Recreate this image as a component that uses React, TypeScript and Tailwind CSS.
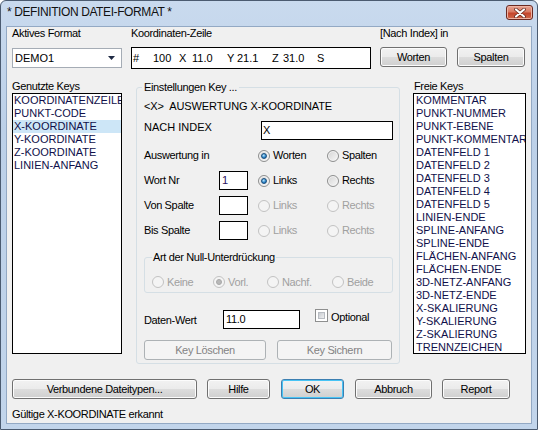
import React from "react";

const keysUsed = ["KOORDINATENZEILE", "PUNKT-CODE", "X-KOORDINATE", "Y-KOORDINATE", "Z-KOORDINATE", "LINIEN-ANFANG"];

const keysFree = [
  "KOMMENTAR",
  "PUNKT-NUMMER",
  "PUNKT-EBENE",
  "PUNKT-KOMMENTAR",
  "DATENFELD 1",
  "DATENFELD 2",
  "DATENFELD 3",
  "DATENFELD 4",
  "DATENFELD 5",
  "LINIEN-ENDE",
  "SPLINE-ANFANG",
  "SPLINE-ENDE",
  "FLÄCHEN-ANFANG",
  "FLÄCHEN-ENDE",
  "3D-NETZ-ANFANG",
  "3D-NETZ-ENDE",
  "X-SKALIERUNG",
  "Y-SKALIERUNG",
  "Z-SKALIERUNG",
  "TRENNZEICHEN",
];

interface BtnProps {
  label: string;
  className?: string;
  disabled?: boolean;
  primary?: boolean;
}

const Btn: React.FC<BtnProps> = ({ label, className = "", disabled, primary }) => {
  if (disabled) {
    return (
      <div className={`h-[20px] rounded-[3px] border border-[#adb2b5] bg-[#f4f4f4] text-[#838383] flex items-center justify-center ${className}`}>
        {label}
      </div>
    );
  }
  return (
    <div
      className={`h-[20px] rounded-[3px] border flex items-center justify-center text-black bg-[linear-gradient(to_bottom,#f2f2f2_0%,#ebebeb_50%,#dddddd_50%,#cfcfcf_100%)] ${
        primary ? "border-[#3c7fb1] shadow-[inset_0_0_0_1px_#48c4f5]" : "border-[#707070] shadow-[inset_0_0_0_1px_#fcfcfc]"
      } ${className}`}
    >
      {label}
    </div>
  );
};

const Radio: React.FC<{ checked?: boolean; disabled?: boolean }> = ({ checked, disabled }) => (
  <div
    className={`w-[12px] h-[12px] shrink-0 rounded-full border flex items-center justify-center ${
      disabled
        ? "border-[#c2c2c2] bg-[#f4f4f4]"
        : "border-[#8e8f8f] bg-[linear-gradient(135deg,#d4d4d4,#f8f8f8)] shadow-[inset_0_0_0_1px_#f4f4f4]"
    }`}
  >
    {checked && (
      <div
        className={`w-[6px] h-[6px] rounded-full ${
          disabled
            ? "bg-[#b8b8b8] border border-[#a8a8a8]"
            : "border border-[#1a4d7c] bg-[radial-gradient(circle_at_40%_35%,#b5e2fa,#2a84c8_60%,#0f5594)]"
        }`}
      />
    )}
  </div>
);

const RadioItem: React.FC<{ label: string; checked?: boolean; disabled?: boolean; className?: string }> = ({
  label,
  checked,
  disabled,
  className = "",
}) => (
  <div className={`flex items-center ${className}`}>
    <Radio checked={checked} disabled={disabled} />
    <span className={`ml-[3px] ${disabled ? "text-[#a0a0a0]" : "text-black"}`}>{label}</span>
  </div>
);

const ListBox: React.FC<{ items: string[]; selected?: number; className?: string; pad: string }> = ({
  items,
  selected,
  className = "",
  pad,
}) => (
  <div className={`h-[261px] border border-black bg-white overflow-hidden tracking-normal ${className}`}>
    {items.map((item, i) => (
      <div
        key={item}
        className={`h-[13px] leading-[13px] whitespace-nowrap text-[#10104a] ${pad} ${i === selected ? "bg-[#cde6f7]" : ""}`}
      >
        {item}
      </div>
    ))}
  </div>
);

const SmallInput: React.FC<{ value?: string }> = ({ value }) => (
  <div className="w-[29px] h-[19px] border border-black bg-white pl-[2px] leading-[17px] text-[#2a1060]">{value}</div>
);

const KeyRow: React.FC<{
  label: string;
  input?: string | null;
  left: string;
  right: string;
  leftChecked?: boolean;
  disabled?: boolean;
}> = ({ label, input, left, right, leftChecked, disabled }) => (
  <div className="h-[25px] flex items-center">
    <div className="w-[75px]">{label}</div>
    <div className="w-[39px]">{input !== null && <SmallInput value={input} />}</div>
    <RadioItem className="w-[69px]" label={left} checked={leftChecked} disabled={disabled} />
    <RadioItem label={right} disabled={disabled} />
  </div>
);

const CloseButton = () => (
  <div className="ml-auto mt-[4px] mr-[4px] w-[27px] h-[15px] rounded-[3px] border border-[#6b2a22] bg-[linear-gradient(to_bottom,#e8a493_0%,#d87a63_45%,#c4452c_55%,#d06a4c_100%)] shadow-[inset_0_0_0_1px_#eeb4a4] flex items-center justify-center">
    <svg width="12" height="10" viewBox="0 0 12 10">
      <path d="M2 1.5 L10 8.5 M10 1.5 L2 8.5" stroke="#5a2018" strokeWidth="3.6" strokeLinecap="round" />
      <path d="M2 1.5 L10 8.5 M10 1.5 L2 8.5" stroke="#ffffff" strokeWidth="2.2" strokeLinecap="round" />
    </svg>
  </div>
);

export default function App() {
  const coords: [string, string][] = [
    ["#", "w-[20px]"],
    ["100", "w-[26px]"],
    ["X", "w-[13px]"],
    ["11.0", "w-[35px]"],
    ["Y", "w-[10px]"],
    ["21.1", "w-[35px]"],
    ["Z", "w-[11px]"],
    ["31.0", "w-[34px]"],
    ["S", "w-[10px]"],
  ];

  return (
    <div className="w-[538px] h-[430px] font-['Liberation_Sans',Arial,sans-serif] text-[11px] leading-[13px] tracking-[-0.35px] text-black">
      <div className="w-full h-full flex flex-col rounded-t-[6px] border border-[#4b5b70] bg-[linear-gradient(to_bottom,#c9daee,#bcd0e8_30%,#c2d5eb)]">
        {/* Title bar */}
        <div className="h-[26px] flex items-start shrink-0">
          <div className="pl-[6px] pt-[4px] text-[12px] leading-[15px] tracking-[-0.4px] text-[#111]">* DEFINITION DATEI-FORMAT *</div>
          <CloseButton />
        </div>

        {/* Client area */}
        <div className="flex-1 mx-[6px] mb-[6px] bg-[#f0f0f0] pl-[5px] shadow-[0_0_0_1px_#93a9c4]">
          {/* Top row */}
          <div className="h-[53px] flex items-start">
            <div className="w-[110px]">
              <div>Aktives Format</div>
              <div className="mt-[8px] h-[20px] border border-[#a5acb5] bg-white flex items-center pl-[2px] tracking-normal">
                <span>DEMO1</span>
                <svg className="ml-auto mr-[6px]" width="7" height="4" viewBox="0 0 7 4">
                  <polygon points="0,0 7,0 3.5,4" fill="#1f2a44" />
                </svg>
              </div>
            </div>
            <div className="ml-[9px] w-[240px]">
              <div>Koordinaten-Zeile</div>
              <div className="mt-[7px] h-[22px] border border-black bg-white flex items-center pl-[1px] whitespace-nowrap tracking-normal">
                {coords.map(([t, w], i) => (
                  <span key={i} className={`inline-block ${w}`}>
                    {t}
                  </span>
                ))}
              </div>
            </div>
            <div className="ml-[9px]">
              <div>[Nach Index] in</div>
              <div className="mt-[7px] flex">
                <Btn label="Worten" className="w-[67px]" />
                <Btn label="Spalten" className="w-[68px] ml-[10px]" />
              </div>
            </div>
          </div>

          {/* Middle */}
          <div className="flex items-start">
            <div className="w-[110px]">
              <div>Genutzte Keys</div>
              <ListBox items={keysUsed} selected={2} pad="pl-[1px]" />
            </div>

            <fieldset className="ml-[14px] mt-[1px] w-[264px] border border-[#d5dfe5] rounded-[3px] pl-[7px] pr-[6px] pb-[3px]">
              <legend className="-ml-[2px] px-[2px]">Einstellungen Key ...</legend>
              <div className="mt-[5px] h-[14px] leading-[14px] whitespace-pre tracking-[-0.1px]">{"<X>  AUSWERTUNG X-KOORDINATE"}</div>
              <div className="mt-[8px] flex items-start tracking-normal">
                <div className="w-[117px]">NACH INDEX</div>
                <div className="w-[132px] h-[19px] border border-black bg-white pl-[1px] leading-[17px]">X</div>
              </div>
              <div className="mt-[3px]">
                <KeyRow label="Auswertung in" input={null} left="Worten" right="Spalten" leftChecked />
                <KeyRow label="Wort Nr" input="1" left="Links" right="Rechts" leftChecked />
                <KeyRow label="Von Spalte" input="" left="Links" right="Rechts" disabled />
                <KeyRow label="Bis Spalte" input="" left="Links" right="Rechts" disabled />
              </div>

              <fieldset className="mt-[8px] w-[249px] border border-[#d5dfe5] rounded-[3px] pl-[7px] pb-[1px]">
                <legend className="px-[1px]">Art der Null-Unterdrückung</legend>
                <div className="mt-[9px] h-[18px] flex items-center">
                  <RadioItem className="w-[61px]" label="Keine" disabled />
                  <RadioItem className="w-[54px]" label="Vorl." checked disabled />
                  <RadioItem className="w-[65px]" label="Nachf." disabled />
                  <RadioItem label="Beide" disabled />
                </div>
              </fieldset>

              <div className="mt-[16px] h-[20px] flex items-start">
                <div className="w-[79px] mt-[5px]">Daten-Wert</div>
                <div className="mt-[1px] w-[77px] h-[19px] border border-black bg-white pl-[2px] leading-[17px]">11.0</div>
                <div className="ml-[15px] w-[13px] h-[13px] border border-[#8e8f8f] bg-white p-[2px]">
                  <div className="w-full h-full border border-[#b8bcc2] bg-[linear-gradient(135deg,#c8ccd1,#eeeff0)]" />
                </div>
                <div className="ml-[3px] mt-[2px]">Optional</div>
              </div>

              <div className="mt-[11px] flex">
                <Btn label="Key Löschen" className="w-[122px]" disabled />
                <Btn label="Key Sichern" className="w-[115px] ml-[11px]" disabled />
              </div>
            </fieldset>

            <div className="ml-[13px] w-[113px]">
              <div className="pl-[1px]">Freie Keys</div>
              <ListBox items={keysFree} pad="pl-[2px]" />
            </div>
          </div>

          {/* Bottom buttons */}
          <div className="mt-[15px] flex">
            <Btn label="Verbundene Dateitypen..." className="w-[185px]" />
            <Btn label="Hilfe" className="w-[63px] ml-[10px]" />
            <Btn label="OK" className="w-[63px] ml-[11px]" primary />
            <Btn label="Abbruch" className="w-[77px] ml-[11px]" />
            <Btn label="Report" className="w-[68px] ml-[10px]" />
          </div>

          <div className="mt-[9px]">Gültige X-KOORDINATE erkannt</div>
        </div>
      </div>
    </div>
  );
}
